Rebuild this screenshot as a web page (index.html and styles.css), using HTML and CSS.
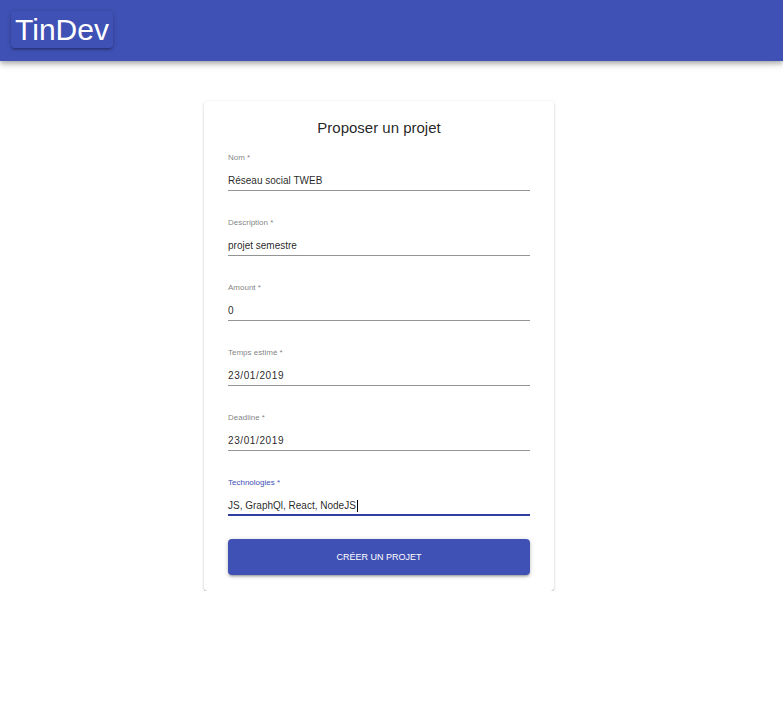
FILE: index.html
```html
<!DOCTYPE html>
<html lang="fr">
<head>
<meta charset="utf-8">
<title>TinDev</title>
<link rel="stylesheet" href="styles.css">
</head>
<body>
<header class="appbar">
  <a class="brand">TinDev</a>
</header>
<main class="main">
  <form class="card">
    <h1 class="title">Proposer un projet</h1>
    <div class="field">
      <label class="label">Nom *</label>
      <div class="input">Réseau social TWEB</div>
    </div>
    <div class="field">
      <label class="label">Description *</label>
      <div class="input">projet semestre</div>
    </div>
    <div class="field">
      <label class="label">Amount *</label>
      <div class="input">0</div>
    </div>
    <div class="field">
      <label class="label">Temps estimé *</label>
      <div class="input date">23/01/2019</div>
    </div>
    <div class="field">
      <label class="label">Deadline *</label>
      <div class="input date">23/01/2019</div>
    </div>
    <div class="field focused">
      <label class="label">Technologies *</label>
      <div class="input">JS, GraphQl, React, NodeJS<span class="caret"></span></div>
    </div>
    <button type="button" class="submit">CRÉER UN PROJET</button>
  </form>
</main>
</body>
</html>
```

FILE: styles.css
```css
* { box-sizing: border-box; }
html, body { margin: 0; padding: 0; background: #fff; }
body { font-family: "Liberation Sans", Arial, sans-serif; color: rgba(0,0,0,0.87); }

.appbar {
  height: 61px;
  background: #3f51b5;
  box-shadow: 0 2px 4px -1px rgba(0,0,0,0.2), 0 4px 5px 0 rgba(0,0,0,0.14), 0 1px 10px 0 rgba(0,0,0,0.12);
  display: flex;
  align-items: flex-start;
  padding: 11px 0 0 11px;
}
.brand {
  display: block;
  width: 102px;
  height: 37px;
  padding: 0 0 0 4px;
  font-size: 30px;
  line-height: 37px;
  color: #fff;
  background: #3f51b5;
  border-radius: 4px;
  box-shadow: 0 1px 5px 0 rgba(0,0,0,0.2), 0 2px 2px 0 rgba(0,0,0,0.14), 0 3px 1px -2px rgba(0,0,0,0.12);
}

.main {
  display: flex;
  justify-content: flex-start;
  padding: 40px 0 0 204px;
}
.card {
  width: 350px;
  background: #fff;
  border-radius: 4px;
  box-shadow: 0 1px 3px 0 rgba(0,0,0,0.2), 0 1px 1px 0 rgba(0,0,0,0.14), 0 2px 1px -1px rgba(0,0,0,0.12);
  padding: 17px 24px 16px;
  display: flex;
  flex-direction: column;
}
.title {
  margin: 0;
  font-size: 15px;
  font-weight: normal;
  text-align: center;
  line-height: 20px;
  color: rgba(0,0,0,0.87);
}
.field {
  display: flex;
  flex-direction: column;
  width: 302px;
}
.field + .field { margin-top: 27px; }
.title + .field { margin-top: 15px; }
.label {
  font-size: 8px;
  line-height: 10px;
  color: rgba(0,0,0,0.54);
}
.input {
  margin-top: 11px;
  font-size: 10px;
  line-height: 14px;
  padding-bottom: 2px;
  border-bottom: 1px solid rgba(0,0,0,0.42);
  color: rgba(0,0,0,0.87);
  display: flex;
  align-items: center;
}
.date { letter-spacing: 0.6px; }
.focused .label { color: #3f51b5; }
.focused .input { border-bottom: 2px solid #303f9f; padding-bottom: 1px; }
.caret {
  display: inline-block;
  width: 1px;
  height: 12px;
  background: #000;
  margin-left: 1px;
}
.submit {
  margin-top: 23px;
  width: 302px;
  height: 36px;
  border: 0;
  border-radius: 4px;
  background: #3f51b5;
  color: #fff;
  font-family: "Liberation Sans", Arial, sans-serif;
  font-size: 9px;
  box-shadow: 0 1px 5px 0 rgba(0,0,0,0.2), 0 2px 2px 0 rgba(0,0,0,0.14), 0 3px 1px -2px rgba(0,0,0,0.12);
}
```
